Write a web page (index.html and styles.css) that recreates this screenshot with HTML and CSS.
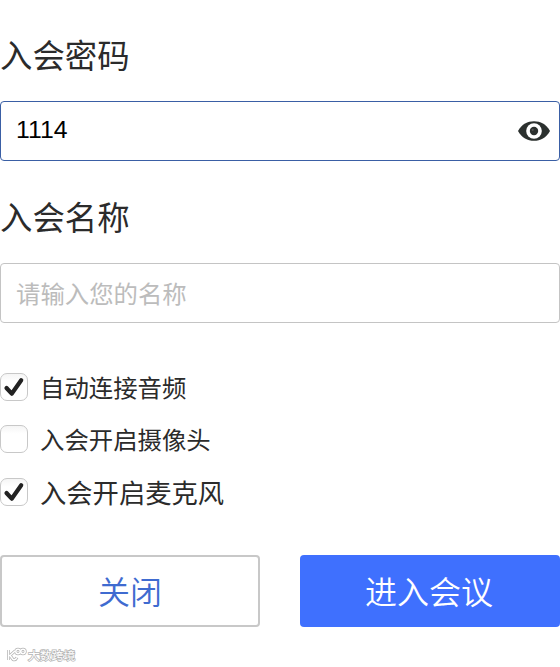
FILE: index.html
```
<!DOCTYPE html>
<html lang="zh-CN">
<head>
    <meta charset="UTF-8">
    <meta name="viewport" content="width=device-width, initial-scale=1.0">
    <title>进入会议</title>
    <link rel="stylesheet" href="styles.css">
</head>
<body>
    <form class="join-form">
        <label class="title" for="password">入会密码</label>
        <div class="field active">
            <input type="text" id="password" value="1114">
            <svg class="eye" viewBox="0 0 32 22" width="32" height="22">
                <path d="M0 11C4 4 9.500 1.200 16 1.200S28 4 32 11C28 18 22.500 20.800 16 20.800S4 18 0 11Z" fill="#2b302e"/>
                <circle cx="16" cy="11" r="7.800" fill="#fff"/>
                <circle cx="16" cy="11" r="4.200" fill="#2b302e"/>
                <circle cx="14.700" cy="9.800" r="1.100" fill="#555"/>
            </svg>
        </div>

        <label class="title" for="name">入会名称</label>
        <div class="field">
            <input type="text" id="name" placeholder="请输入您的名称">
        </div>

        <div class="options">
            <label class="option">
                <input type="checkbox" checked>
                <span class="box"><svg viewBox="0 0 28 28"><path d="M6.500 15L11.700 20.700L21.200 7.200"/></svg></span>
                <span>自动连接音频</span>
            </label>
            <label class="option">
                <input type="checkbox">
                <span class="box"><svg viewBox="0 0 28 28"><path d="M6.500 15L11.700 20.700L21.200 7.200"/></svg></span>
                <span>入会开启摄像头</span>
            </label>
            <label class="option large">
                <input type="checkbox" checked>
                <span class="box"><svg viewBox="0 0 28 28"><path d="M6.500 15L11.700 20.700L21.200 7.200"/></svg></span>
                <span>入会开启麦克风</span>
            </label>
        </div>

        <div class="buttons">
            <button type="button" class="btn">关闭</button>
            <button type="submit" class="btn primary">进入会议</button>
        </div>
    </form>

    <footer class="brand">
        <svg viewBox="0 0 21 16" width="21" height="16">
            <g class="brand-edge">
                <path d="M2.500 3V13M9 4L4 8.500L7 12.500Q9.500 13.500 11 10.500"/>
                <circle cx="12" cy="4.500" r="2.200"/>
                <circle cx="17" cy="4.500" r="2.200"/>
            </g>
            <g class="brand-fill">
                <path d="M2.500 3V13M9 4L4 8.500L7 12.500Q9.500 13.500 11 10.500"/>
                <circle cx="12" cy="4.500" r="2.200"/>
                <circle cx="17" cy="4.500" r="2.200"/>
            </g>
        </svg>
        <span>大数跨境</span>
    </footer>
</body>
</html>
```
FILE: styles.css
```
* {
    box-sizing: border-box;
}
body {
    margin: 0;
    height: 667px;
    overflow: hidden;
    background: #fff;
    color: #2b2b2b;
    font-family: "Noto Sans CJK SC", sans-serif;
}
.join-form {
    padding-top: 30px;
}
.title {
    display: block;
    height: 48px;
    line-height: 48px;
    font-size: 32.4px;
}
.field {
    display: flex;
    align-items: center;
    height: 60px;
    margin: 23px 0 31px;
    padding: 0 9px 0 15px;
    border: 1px solid #c4c4c4;
    border-radius: 4px;
}
.field.active {
    border-color: #3a5fa5;
}
.field input {
    flex: 1;
    min-width: 0;
    height: 40px;
    padding: 0 0 2px;
    border: 0;
    outline: 0;
    background: none;
    font-family: "Noto Sans CJK SC", sans-serif;
    font-size: 24.4px;
    color: #000;
}
.field.active input {
    font-family: "Liberation Sans", Arial, sans-serif;
    font-size: 24.8px;
}
.field input::placeholder {
    color: #bcbcbc;
    opacity: 1;
}
.eye {
    flex: none;
}
.options {
    display: flex;
    flex-direction: column;
    gap: 16px;
    margin-top: 46px;
}
.option {
    display: flex;
    align-items: center;
    gap: 12px;
    height: 36px;
    font-size: 24.4px;
    line-height: 36px;
}
.option.large {
    height: 38px;
    font-size: 26.3px;
}
.option input {
    display: none;
}
.box {
    width: 28px;
    height: 28px;
    border: 1px solid #c8c8c8;
    border-radius: 7px;
    background: linear-gradient(#f5f5f5, #fff 30%);
}
.box svg {
    display: none;
    width: 28px;
    height: 28px;
    margin: -1px;
    fill: none;
    stroke: #222;
    stroke-width: 4.2;
    stroke-linecap: round;
    stroke-linejoin: round;
}
.option input:checked + .box svg {
    display: block;
}
.buttons {
    display: grid;
    grid-template-columns: 1fr 1fr;
    gap: 40px;
    margin-top: 44px;
}
.btn {
    height: 72px;
    padding: 0 0 2px;
    border: 2px solid #c8c8c8;
    border-radius: 4px;
    background: #fff;
    color: #3f6bd0;
    font-family: "Noto Sans CJK SC", sans-serif;
    font-size: 32px;
    font-weight: 350;
}
.btn.primary {
    padding-right: 2px;
    border: 0;
    background: #3f70fe;
    color: #fff;
}
.brand {
    display: flex;
    align-items: center;
    gap: 1px;
    height: 20px;
    margin-top: 18px;
    padding-left: 6px;
    color: #fff;
    font-size: 11.8px;
    line-height: 20px;
    -webkit-text-stroke: 1.5px #b4b4b4;
    paint-order: stroke fill;
}
.brand-edge, .brand-fill {
    fill: none;
    stroke: #b4b4b4;
    stroke-width: 3;
}
.brand-fill {
    stroke: #fff;
    stroke-width: 1.5;
}
```
